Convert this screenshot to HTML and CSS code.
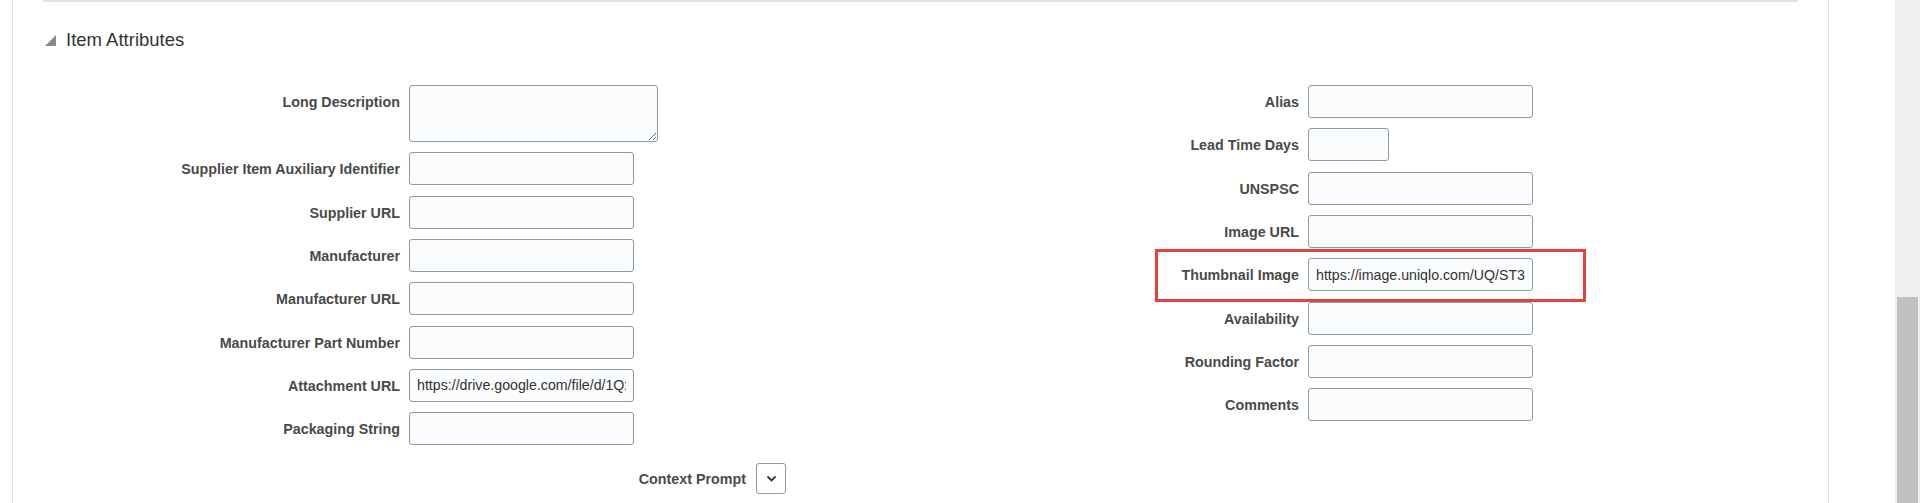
FILE: index.html
```html
<!DOCTYPE html>
<html lang="en">
<head>
    <meta charset="UTF-8">
    <meta name="viewport" content="width=device-width, initial-scale=1.0">
    <title>Item Attributes</title>
    <link rel="stylesheet" href="styles.css">
</head>
<body>
<div class="page">
    <div class="panel">
        <div class="divider"></div>

        <div class="section-header">
            <svg class="toggle" width="11" height="11" viewBox="0 0 11 11"><polygon points="11,0 11,11 0,11" fill="#8a8a8a"/></svg>
            <span>Item Attributes</span>
        </div>

        <div class="form">
            <div class="col col-left">
                <div class="row">
                    <label class="lbl">Long Description</label>
                    <textarea class="field area"></textarea>
                </div>
                <div class="row">
                    <label class="lbl">Supplier Item Auxiliary Identifier</label>
                    <input type="text" class="field">
                </div>
                <div class="row">
                    <label class="lbl">Supplier URL</label>
                    <input type="text" class="field">
                </div>
                <div class="row">
                    <label class="lbl">Manufacturer</label>
                    <input type="text" class="field">
                </div>
                <div class="row">
                    <label class="lbl">Manufacturer URL</label>
                    <input type="text" class="field">
                </div>
                <div class="row">
                    <label class="lbl">Manufacturer Part Number</label>
                    <input type="text" class="field">
                </div>
                <div class="row">
                    <label class="lbl">Attachment URL</label>
                    <input type="text" class="field" value="https://drive.google.com/file/d/1QxR7mPz0kLdA2/view">
                </div>
                <div class="row">
                    <label class="lbl">Packaging String</label>
                    <input type="text" class="field">
                </div>
            </div>

            <div class="col col-right">
                <div class="row">
                    <label class="lbl">Alias</label>
                    <input type="text" class="field">
                </div>
                <div class="row">
                    <label class="lbl">Lead Time Days</label>
                    <input type="text" class="field short">
                </div>
                <div class="row">
                    <label class="lbl">UNSPSC</label>
                    <input type="text" class="field">
                </div>
                <div class="row">
                    <label class="lbl">Image URL</label>
                    <input type="text" class="field">
                </div>
                <div class="row highlight">
                    <label class="lbl">Thumbnail Image</label>
                    <input type="text" class="field" value="https://image.uniqlo.com/UQ/ST3/WesternCommon/imagesgoods/422992/item/goods_09_422992.jpg">
                </div>
                <div class="row">
                    <label class="lbl">Availability</label>
                    <input type="text" class="field">
                </div>
                <div class="row">
                    <label class="lbl">Rounding Factor</label>
                    <input type="text" class="field">
                </div>
                <div class="row">
                    <label class="lbl">Comments</label>
                    <input type="text" class="field">
                </div>
            </div>
        </div>

        <div class="row context">
            <label class="lbl">Context Prompt</label>
            <button class="select-btn" type="button">
                <svg width="11" height="7" viewBox="0 0 11 7"><polyline points="1.5,1.5 5.5,5.5 9.5,1.5" fill="none" stroke="#333" stroke-width="1.8"/></svg>
            </button>
        </div>
    </div>

    <div class="scrollbar">
        <div class="thumb"></div>
    </div>
</div>
</body>
</html>
```

FILE: styles.css
```css
body {
    margin: 0;
    width: 1920px;
    height: 503px;
    overflow: hidden;
    background-color: #ffffff;
    font-family: "Liberation Sans", Arial, sans-serif;
    color: #333333;
}
.page {
    display: flex;
    height: 503px;
}
.panel {
    width: 1755px;
    margin-left: 12px;
    margin-right: 66px;
    padding: 0 30px;
    border-left: 1px solid #d6dfe6;
    border-right: 1px solid #d6dfe6;
}
.divider {
    height: 2px;
    background-color: #dbe3e9;
}
.section-header {
    display: flex;
    align-items: center;
    height: 22px;
    margin-top: 27px;
    font-size: 18.5px;
    color: #333333;
}
.toggle {
    margin-left: 2px;
    margin-right: 10px;
}
.form {
    display: flex;
    margin-top: 34px;
}
.col {
    display: flex;
    flex-direction: column;
    gap: 10.33px;
}
.col-left {
    width: 877px;
}
.col-right {
    flex: 1;
}
.row {
    display: flex;
    align-items: flex-start;
}
.lbl {
    height: 33px;
    line-height: 35px;
    font-size: 14.3px;
    font-weight: bold;
    color: #4a4a4a;
    text-align: right;
    margin-right: 9px;
    white-space: nowrap;
}
.col-left .lbl {
    width: 357px;
}
.col-right .lbl {
    width: 379px;
}
.field {
    box-sizing: border-box;
    width: 225px;
    height: 33px;
    margin: 0;
    padding: 0 7px;
    border: 1px solid #8d9ca8;
    border-radius: 3px;
    background-color: #fbfcfd;
    font-family: "Liberation Sans", Arial, sans-serif;
    font-size: 14.2px;
    color: #333333;
}
.area {
    width: 249px;
    height: 57px;
    padding: 6px 7px;
    resize: both;
}
.short {
    width: 81px;
}
.highlight {
    position: relative;
}
.highlight::after {
    content: "";
    position: absolute;
    left: 235px;
    top: -9px;
    width: 431px;
    height: 53px;
    box-sizing: border-box;
    border: 3px solid #e2453f;
}
.context {
    margin-top: 18px;
}
.context .lbl {
    width: 703px;
    height: 31px;
    line-height: 32px;
    margin-right: 10px;
}
.select-btn {
    box-sizing: border-box;
    width: 30px;
    height: 31px;
    padding: 0;
    border: 1px solid #8d9ca8;
    border-radius: 3px;
    background-color: #ffffff;
    display: flex;
    align-items: center;
    justify-content: center;
}
.scrollbar {
    width: 25px;
    background-color: #f0f0f0;
    display: flex;
    flex-direction: column;
}
.thumb {
    flex: 1;
    margin: 297px 2px 0 2px;
    background-color: #c1c1c1;
}
```
